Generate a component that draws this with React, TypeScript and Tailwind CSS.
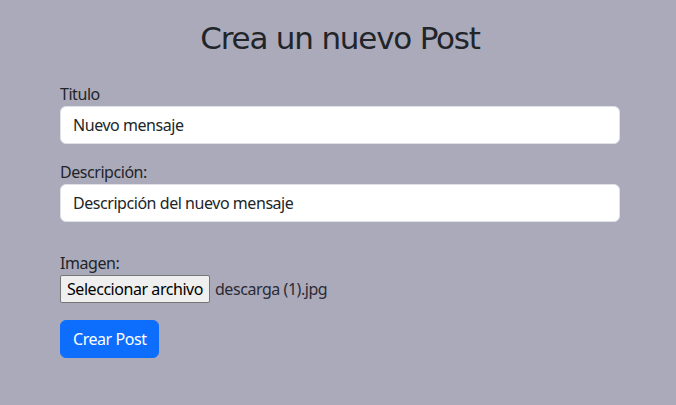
export default function App() {
  return (
    <div className="min-h-[405px] w-full bg-[#abaabb] text-[#212529] font-['Segoe_UI','Noto_Sans',sans-serif] text-[16px] leading-6 tracking-[-0.45px]">
      <div className="w-[560px] ml-[60px] pt-[14px]">
        <h1 className="text-center text-[31px] leading-[48px] font-['Comic_Sans_MS','DejaVu_Sans',sans-serif] tracking-[-1.2px] mb-[20px]">
          Crea un nuevo Post
        </h1>
        <div className="mb-[16px]">
          <label className="block">Titulo</label>
          <div className="h-[38px] bg-white border border-[#dee2e6] rounded-[6px] px-3 flex items-center">
            Nuevo mensaje
          </div>
        </div>
        <div className="mb-[29px]">
          <label className="block">Descripción:</label>
          <div className="h-[38px] bg-white border border-[#dee2e6] rounded-[6px] px-3 flex items-center">
            Descripción del nuevo mensaje
          </div>
        </div>
        <div className="mb-[17px]">
          <label className="block">Imagen:</label>
          <div className="flex items-center h-[28px]">
            <span className="h-[28px] px-[6px] flex items-center bg-[#efefef] border border-[#767676] rounded-[2px] text-black">
              Seleccionar archivo
            </span>
            <span className="ml-[5px] text-[#2b2b33]">descarga (1).jpg</span>
          </div>
        </div>
        <button className="h-[38px] px-3 bg-[#0d6efd] text-white rounded-[6px] border border-[#0d6efd]">
          Crear Post
        </button>
      </div>
    </div>
  );
}
